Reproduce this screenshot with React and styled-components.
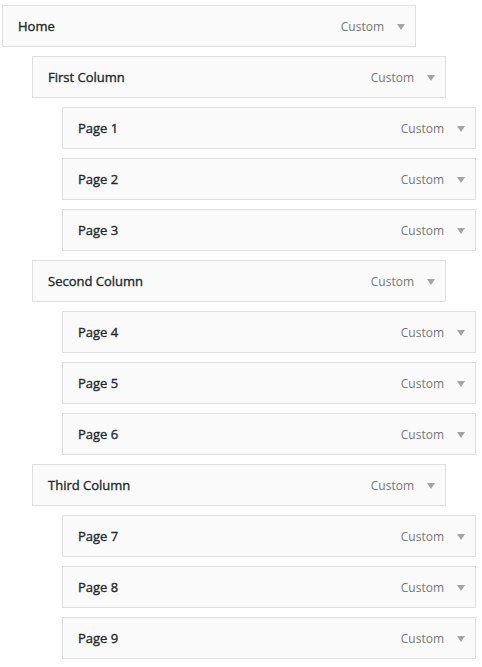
import styled, { createGlobalStyle } from 'styled-components';

const GlobalStyle = createGlobalStyle`
  body {
    margin: 0;
    background: #fff;
    font-family: "Open Sans", "Liberation Sans", sans-serif;
  }
`;

const MenuList = styled.ul`
  list-style: none;
  margin: 0;
  padding: 5px 0 0 2px;
  display: flex;
  flex-direction: column;
  gap: 9px;
`;

const Item = styled.li`
  margin-left: ${(p) => p.depth * 30}px;
`;

const Handle = styled.div`
  box-sizing: border-box;
  width: 414px;
  height: 42px;
  display: flex;
  align-items: center;
  justify-content: space-between;
  padding: 0 10px 0 15px;
  border: 1px solid #dfdfdf;
  background: #fafafa;
`;

/* semibold look: regular face thickened a little */
const Title = styled.span`
  font-size: 13px;
  font-weight: 400;
  color: #23282d;
  -webkit-text-stroke: 0.35px #23282d;
`;

const Controls = styled.span`
  display: flex;
  align-items: center;
  gap: 13px;
`;

const Type = styled.span`
  font-size: 12px;
  color: #777;
`;

const Arrow = styled.span`
  width: 0;
  height: 0;
  border-left: 4px solid transparent;
  border-right: 4px solid transparent;
  border-top: 6px solid #a0a5aa;
  margin-top: 1px;
`;

const items = [
  { title: 'Home', depth: 0 },
  { title: 'First Column', depth: 1 },
  { title: 'Page 1', depth: 2 },
  { title: 'Page 2', depth: 2 },
  { title: 'Page 3', depth: 2 },
  { title: 'Second Column', depth: 1 },
  { title: 'Page 4', depth: 2 },
  { title: 'Page 5', depth: 2 },
  { title: 'Page 6', depth: 2 },
  { title: 'Third Column', depth: 1 },
  { title: 'Page 7', depth: 2 },
  { title: 'Page 8', depth: 2 },
  { title: 'Page 9', depth: 2 },
];

export default function App() {
  return (
    <>
      <GlobalStyle />
      <MenuList>
        {items.map((item) => (
          <Item key={item.title} depth={item.depth}>
            <Handle>
              <Title>{item.title}</Title>
              <Controls>
                <Type>Custom</Type>
                <Arrow />
              </Controls>
            </Handle>
          </Item>
        ))}
      </MenuList>
    </>
  );
}
